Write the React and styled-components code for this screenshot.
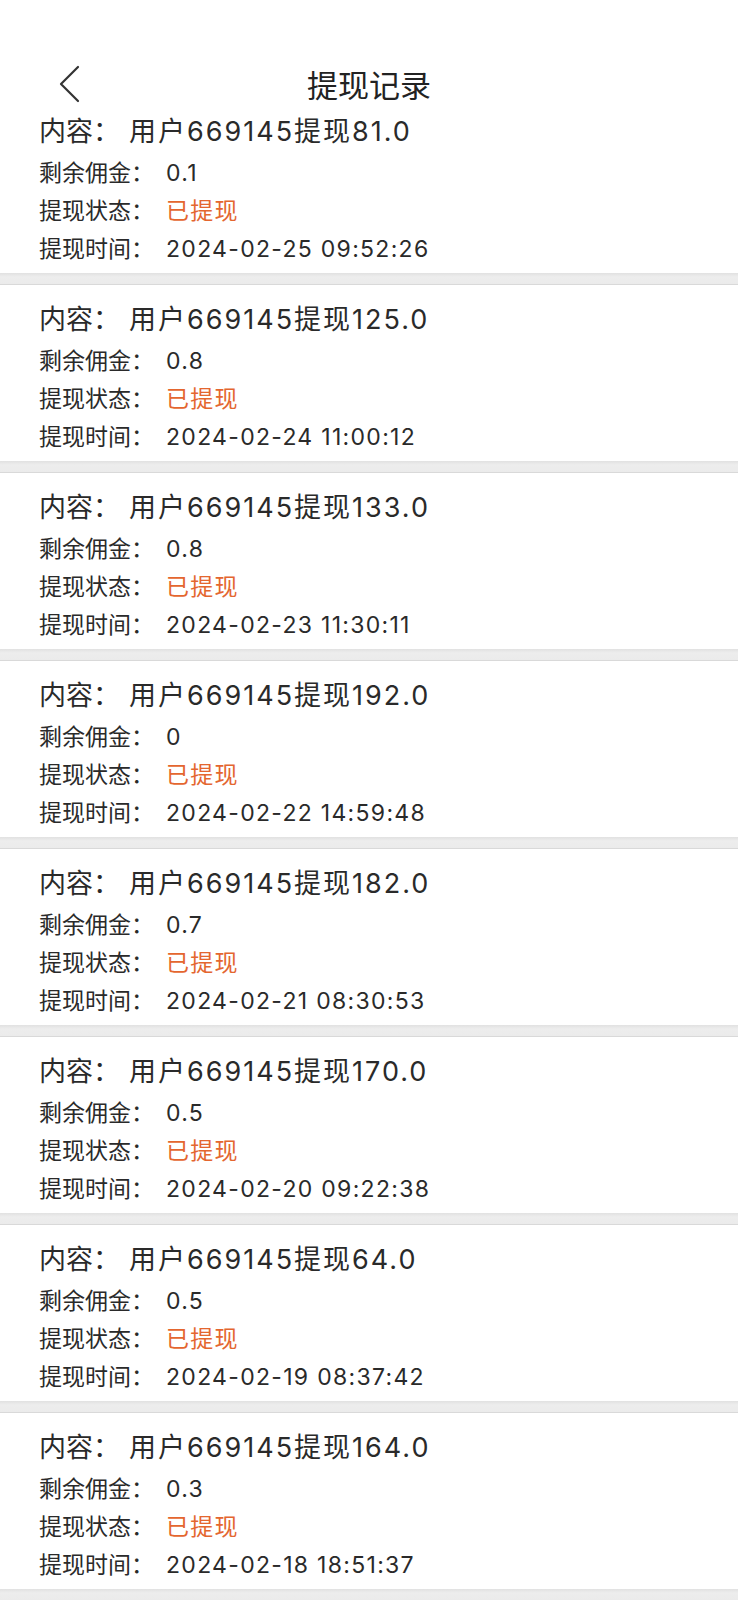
import React from "react";
import styled, { createGlobalStyle } from "styled-components";

const GlobalStyle = createGlobalStyle`
  html, body {
    margin: 0;
    padding: 0;
    background: #fff;
  }
  body {
    font-family: "Noto Sans CJK SC", "Noto Sans", sans-serif;
    color: #2a2a2a;
  }
`;

const Page = styled.div`
  width: 100%;
  background: #fff;
`;

// ---------- header ----------
const Header = styled.header`
  height: 97px;
  box-sizing: border-box;
  padding-top: 62px;
  display: grid;
  grid-template-columns: 1fr auto 1fr;
  grid-template-rows: 44px;
  align-items: center;
`;

const BackButton = styled.button`
  justify-self: start;
  margin-left: 58px;
  padding: 0;
  border: none;
  background: none;
  display: flex;
  align-items: center;
  cursor: pointer;
`;

const Title = styled.h1`
  margin: 0;
  font-size: 31px;
  font-weight: 400;
  line-height: 44px;
  color: #222;
`;

// ---------- list ----------
const List = styled.div`
  display: flex;
  flex-direction: column;
`;

const Card = styled.section`
  &::after {
    content: "";
    display: block;
    height: 11px;
    background: linear-gradient(#e1e1e1, #ededed 35%, #ebebeb);
    border-bottom: 1px solid #d9d9d9;
  }
`;

const CardBody = styled.div`
  height: 176px;
  box-sizing: border-box;
  padding: 14px 0 0 39px;
  display: flex;
  flex-direction: column;
`;

const Row = styled.div`
  display: flex;
  align-items: baseline;
  white-space: nowrap;
  height: 38px;
  font-size: ${(p) => (p.$main ? "27px" : "23px")};
  line-height: 38px;
  margin-bottom: ${(p) => (p.$main ? "3px" : "0")};
`;

const Label = styled.span`
  color: #2a2a2a;
`;

const Value = styled.span`
  margin-left: ${(p) => (p.$main ? "9px" : "12px")};
  font-family: "Inter", "Noto Sans CJK SC", sans-serif;
  letter-spacing: ${(p) => (p.$main ? "2px" : "1.3px")};
  color: ${(p) => (p.$accent ? "#e4662f" : "#2a2a2a")};
`;

const records = [
  { amount: "81.0", left: "0.1", time: "2024-02-25 09:52:26" },
  { amount: "125.0", left: "0.8", time: "2024-02-24 11:00:12" },
  { amount: "133.0", left: "0.8", time: "2024-02-23 11:30:11" },
  { amount: "192.0", left: "0", time: "2024-02-22 14:59:48" },
  { amount: "182.0", left: "0.7", time: "2024-02-21 08:30:53" },
  { amount: "170.0", left: "0.5", time: "2024-02-20 09:22:38" },
  { amount: "64.0", left: "0.5", time: "2024-02-19 08:37:42" },
  { amount: "164.0", left: "0.3", time: "2024-02-18 18:51:37" },
];

const ChevronLeft = () => (
  <svg width="22" height="38" viewBox="0 0 22 38" fill="none">
    <path
      d="M20 2 L3 19 L20 36"
      stroke="#333"
      strokeWidth="2.2"
      strokeLinecap="round"
      strokeLinejoin="round"
    />
  </svg>
);

const RecordCard = ({ amount, left, time }) => (
  <Card>
    <CardBody>
      <Row $main>
        <Label>内容：</Label>
        <Value $main>用户669145提现{amount}</Value>
      </Row>
      <Row>
        <Label>剩余佣金：</Label>
        <Value>{left}</Value>
      </Row>
      <Row>
        <Label>提现状态：</Label>
        <Value $accent>已提现</Value>
      </Row>
      <Row>
        <Label>提现时间：</Label>
        <Value>{time}</Value>
      </Row>
    </CardBody>
  </Card>
);

export default function App() {
  return (
    <Page>
      <GlobalStyle />
      <Header>
        <BackButton aria-label="返回">
          <ChevronLeft />
        </BackButton>
        <Title>提现记录</Title>
        <span />
      </Header>
      <List>
        {records.map((r) => (
          <RecordCard key={r.time} {...r} />
        ))}
      </List>
    </Page>
  );
}
